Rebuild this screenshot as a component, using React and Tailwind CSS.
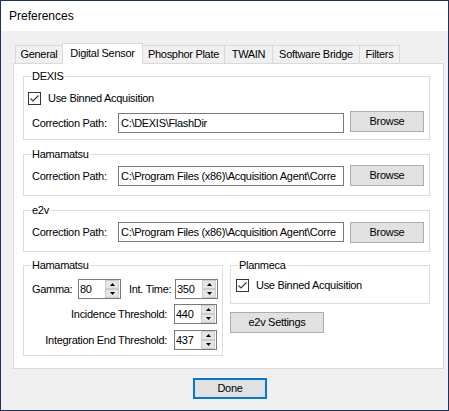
import React from 'react';

const font = { fontFamily: '"Liberation Sans", Arial, sans-serif' };

// Windows-style checkbox, always checked here
const Check = () => (
  <div className="w-[13px] h-[13px] border border-[#333333] bg-white flex items-center justify-center shrink-0">
    <svg width="11" height="11" viewBox="0 0 11 11">
      <polyline points="1.5,5.5 4,8 9.5,2.5" fill="none" stroke="#333333" strokeWidth="1.1" />
    </svg>
  </div>
);

const Group = ({ label, className, children }) => (
  <div className={`relative border border-[#dcdcdc] ${className}`}>
    <span className="absolute left-[7px] -top-[7px] leading-[13px] bg-white px-[1px]">{label}</span>
    {children}
  </div>
);

const Btn = ({ children, className }) => (
  <div className={`h-[21px] bg-[#e1e1e1] border border-[#adadad] flex items-center justify-center shrink-0 ${className}`}>
    {children}
  </div>
);

const TextBox = ({ value, className }) => (
  <div className={`h-[20px] w-[226px] border border-[#7a7a7a] bg-white pl-[2px] flex items-center overflow-hidden whitespace-nowrap shrink-0 ${className}`}>
    {value}
  </div>
);

const Arrow = ({ up }) => (
  <div className="h-[9px] bg-[#e5e5e5] border border-[#cccccc] flex items-center justify-center">
    <svg width="5" height="3" viewBox="0 0 5 3">
      {up ? <polygon points="0,3 5,3 2.5,0" fill="#000" /> : <polygon points="0,0 5,0 2.5,3" fill="#000" />}
    </svg>
  </div>
);

const Spin = ({ value }) => (
  <div className="h-[20px] w-[43px] border border-[#7a7a7a] bg-white flex shrink-0">
    <div className="flex-1 pl-[1px] flex items-center">{value}</div>
    <div className="w-[14px] flex flex-col mr-[1px]">
      <Arrow up />
      <Arrow />
    </div>
  </div>
);

const PathRow = ({ value, top, inputTop, btnTop }) => (
  <div className={`flex items-start pl-[8px] ${top}`}>
    <div className={`w-[86px] leading-[20px] ${inputTop}`}>Correction Path:</div>
    <TextBox value={value} className={inputTop} />
    <Btn className={`w-[74px] ml-[6px] ${btnTop}`}>Browse</Btn>
  </div>
);

const tabs = [
  { name: 'General', w: 'w-[47px] border-l' },
  { name: 'Digital Sensor', w: 'w-[81px]', active: true },
  { name: 'Phosphor Plate', w: 'w-[82px] border-r' },
  { name: 'TWAIN', w: 'w-[48px] border-r' },
  { name: 'Software Bridge', w: 'w-[87px] border-r' },
  { name: 'Filters', w: 'w-[40px] border-r' },
];

export default function App() {
  return (
    <div className="w-[449px] h-[411px] border border-[#1c3160] bg-[#f0f0f0] flex flex-col text-[11px] tracking-[-0.3px] text-black" style={font}>
      {/* title bar */}
      <div className="h-[30px] bg-white flex items-center pl-[8px] text-[12px] tracking-normal">Preferences</div>

      {/* tab strip */}
      <div className="flex items-start h-[20px] mt-[12px] ml-[14px]">
        {tabs.map((t) =>
          t.active ? (
            <div key={t.name} className="relative z-10 h-[21px] w-[81px] bg-white border border-b-0 border-[#d9d9d9] flex items-center justify-center pb-[1px]">
              {t.name}
            </div>
          ) : (
            <div key={t.name} className={`h-[18px] mt-[2px] border-t border-[#d9d9d9] flex items-center justify-center ${t.w}`}>
              {t.name}
            </div>
          )
        )}
      </div>

      {/* tab panel */}
      <div className="ml-[12px] w-[431px] h-[306px] border border-[#d9d9d9] bg-white pl-[9px]">
        <Group label="DEXIS" className="mt-[12px] w-[407px] h-[64px]">
          <div className="flex items-center mt-[15px] pl-[4px]">
            <Check />
            <span className="ml-[7px] leading-[13px]">Use Binned Acquisition</span>
          </div>
          <PathRow value="C:\DEXIS\FlashDir" top="mt-[6px]" inputTop="mt-[2px]" btnTop="mt-0" />
        </Group>

        <Group label="Hamamatsu" className="mt-[14px] w-[407px] h-[42px]">
          <PathRow value="C:\Program Files (x86)\Acquisition Agent\Corre" top="mt-[10px]" inputTop="mt-[1px]" btnTop="mt-0" />
        </Group>

        <Group label="e2v" className="mt-[14px] w-[407px] h-[42px]">
          <PathRow value="C:\Program Files (x86)\Acquisition Agent\Corre" top="mt-[11px]" inputTop="mt-0" btnTop="mt-0" />
        </Group>

        <div className="flex items-start mt-[13px] gap-[7px]">
          <Group label="Hamamatsu" className="w-[200px] h-[91px]">
            <div className="flex items-center mt-[13px] pl-[8px]">
              <div className="w-[46px]">Gamma:</div>
              <Spin value="80" />
              <div className="w-[46px] ml-[8px]">Int. Time:</div>
              <Spin value="350" />
            </div>
            <div className="flex items-center justify-end mt-[5px] pr-[5px]">
              <span className="mr-[7px]">Incidence Threshold:</span>
              <Spin value="440" />
            </div>
            <div className="flex items-center justify-end mt-[6px] pr-[5px]">
              <span className="mr-[7px]">Integration End Threshold:</span>
              <Spin value="437" />
            </div>
          </Group>

          <div className="flex flex-col">
            <Group label="Planmeca" className="w-[200px] h-[39px]">
              <div className="flex items-center mt-[13px] pl-[5px]">
                <Check />
                <span className="ml-[7px] leading-[13px]">Use Binned Acquisition</span>
              </div>
            </Group>
            <Btn className="w-[94px] mt-[8px]">e2v Settings</Btn>
          </div>
        </div>
      </div>

      {/* footer */}
      <div className="mt-[9px] ml-[192px] w-[74px] h-[21px] bg-[#e1e1e1] border-2 border-[#0078d7] flex items-center justify-center">
        Done
      </div>
    </div>
  );
}
